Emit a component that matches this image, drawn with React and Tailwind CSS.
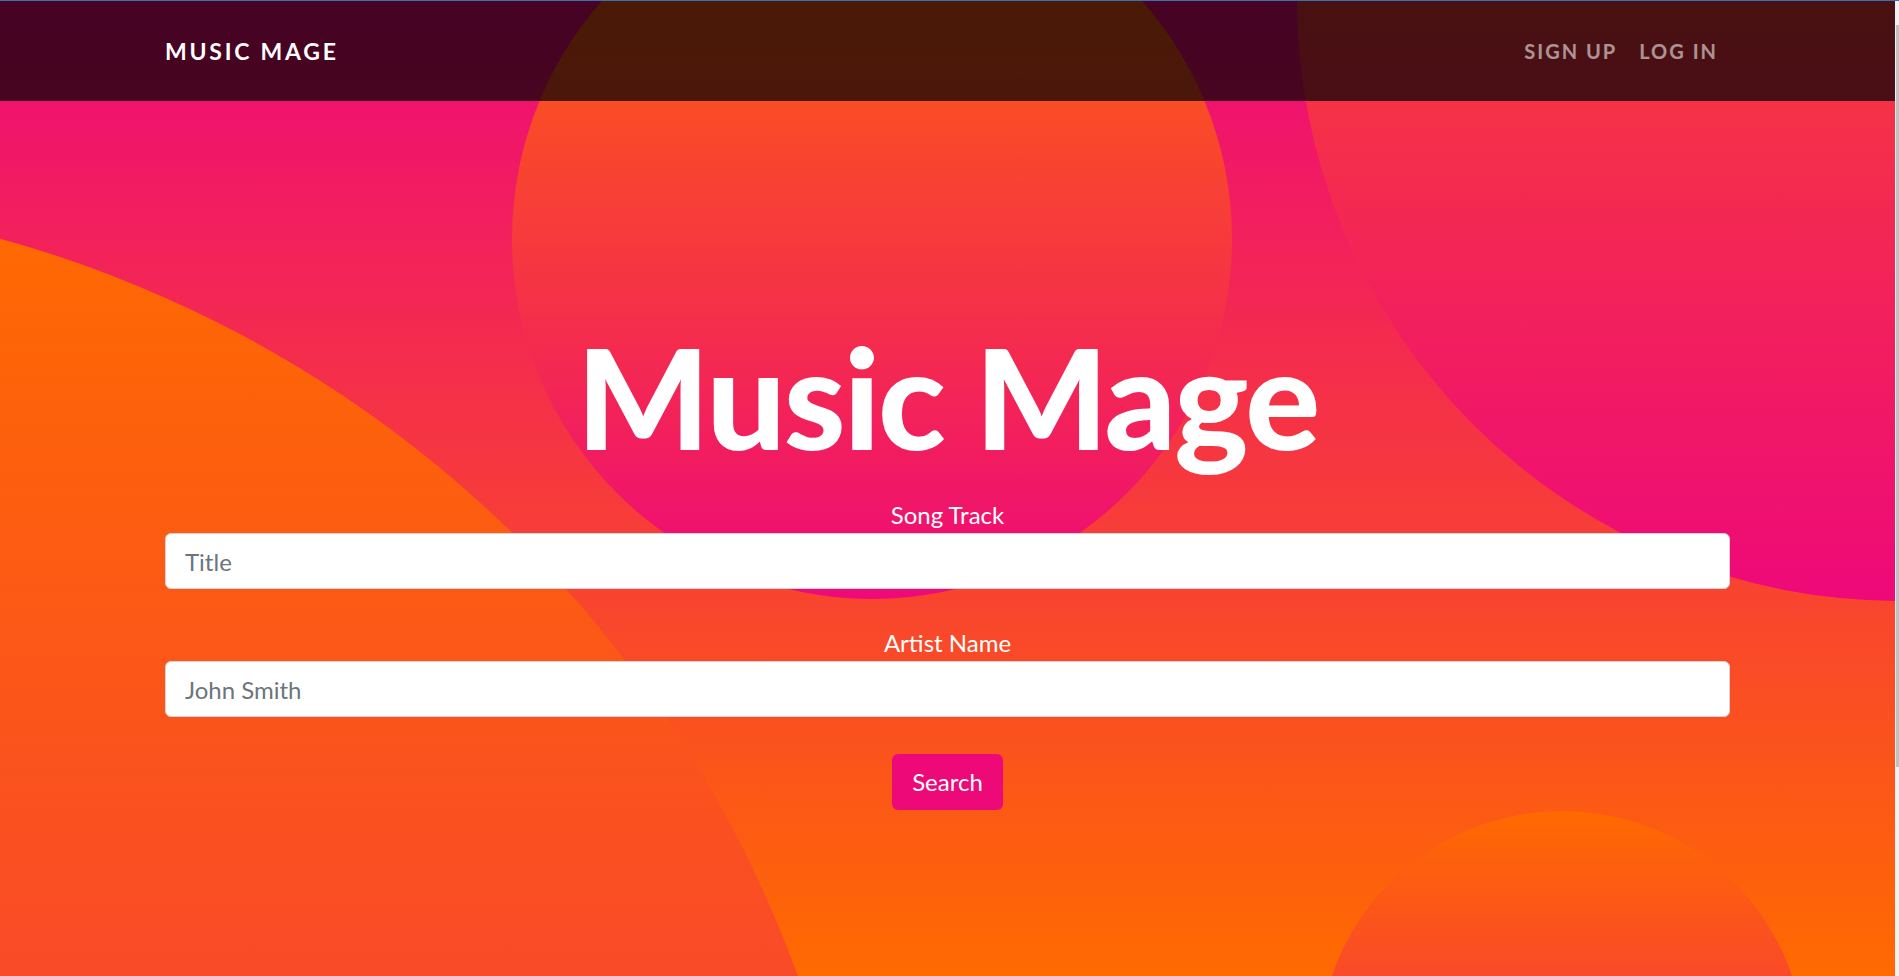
export default function App() {
  return (
    <div className="flex h-[976px] w-full flex-col overflow-hidden font-[Lato,'Open_Sans',sans-serif]">
      <div className="h-px w-full shrink-0 bg-[#3d6eb4]" />
      <div className="flex min-h-0 flex-1">
        <main className="relative flex-1 overflow-hidden bg-[linear-gradient(to_bottom,#ee0979,#ff6a00)]">
          <svg
            className="absolute inset-0 h-full w-full"
            viewBox="0 0 1895 975"
            preserveAspectRatio="none"
            aria-hidden="true"
          >
            <defs>
              <linearGradient id="og" x1="0" y1="0" x2="0" y2="1">
                <stop offset="0" stopColor="#ff6a00" />
                <stop offset="1" stopColor="#ee0979" />
              </linearGradient>
            </defs>
            <circle cx="-315" cy="1379" r="1184" fill="url(#og)" />
            <circle cx="872" cy="238" r="360" fill="url(#og)" />
            <circle cx="1899" cy="-2" r="602" fill="url(#og)" />
            <circle cx="1562" cy="1053" r="243" fill="url(#og)" />
          </svg>

          <div className="relative flex flex-col">
            <nav className="h-[100px] bg-black/70">
              <div className="mx-[165px] flex h-full items-center justify-between">
                <a className="text-[23px] font-bold uppercase tracking-[0.12em] text-white">
                  Music Mage
                </a>
                <ul className="flex items-center gap-[22px] pr-[12px] text-[20px] font-bold uppercase tracking-[0.1em] text-white/55">
                  <li>Sign Up</li>
                  <li>Log In</li>
                </ul>
              </div>
            </nav>

            <section className="mx-[165px] flex flex-col items-center pt-[211px]">
              <h1 className="text-[140px] font-black leading-[1.2] tracking-[-2px] text-white">
                Music Mage
              </h1>
              <label className="mt-[17px] text-[24px] leading-[36px] text-white">
                Song Track
              </label>
              <input
                className="h-[56px] w-full rounded-[6px] border border-[#ced4da] bg-white px-[19px] text-[24px] text-[#495057] outline-none placeholder:text-[#6c757d]"
                placeholder="Title"
              />
              <label className="mt-[36px] text-[24px] leading-[36px] text-white">
                Artist Name
              </label>
              <input
                className="h-[56px] w-full rounded-[6px] border border-[#ced4da] bg-white px-[19px] text-[24px] text-[#495057] outline-none placeholder:text-[#6c757d]"
                placeholder="John Smith"
              />
              <button className="mt-[37px] h-[56px] rounded-[6px] bg-[#ee0979] px-[20px] text-[24px] text-white">
                Search
              </button>
            </section>
          </div>
        </main>
        <div className="relative w-[4px] shrink-0 bg-[#f1f1f1]">
          <div className="absolute right-0 top-[24px] h-[742px] w-[3px] bg-[#c1c1c1]" />
        </div>
      </div>
    </div>
  );
}
